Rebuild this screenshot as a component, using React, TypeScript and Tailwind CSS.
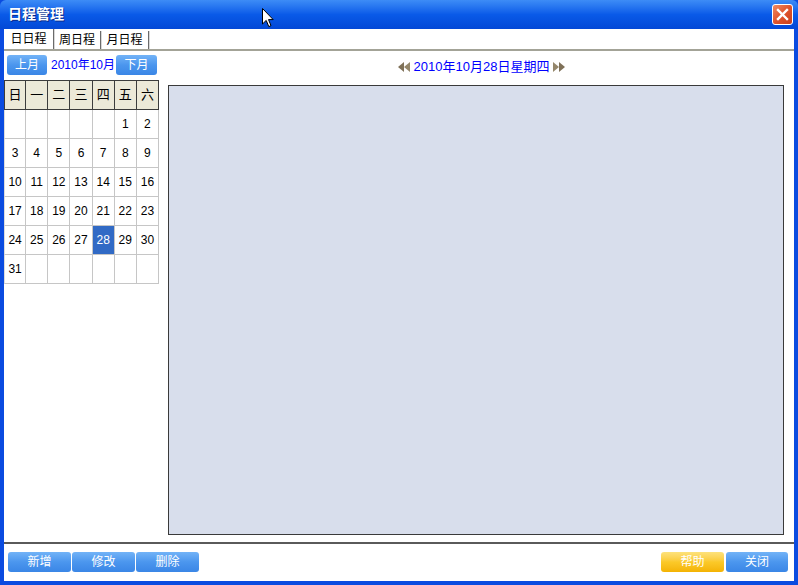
import React from 'react';

const weekNames = ['日', '一', '二', '三', '四', '五', '六'];

// October 2010 starts on Friday
const days: (number | null)[] = [
    null, null, null, null, null, 1, 2,
    3, 4, 5, 6, 7, 8, 9,
    10, 11, 12, 13, 14, 15, 16,
    17, 18, 19, 20, 21, 22, 23,
    24, 25, 26, 27, 28, 29, 30,
    31, null, null, null, null, null, null,
];

const font = { fontFamily: '"Liberation Sans", "Noto Sans CJK SC", sans-serif' };

function BlueButton({ label, className = '' }: { label: string; className?: string }) {
    return (
        <button
            className={`shrink-0 h-[20px] rounded-[3px] bg-gradient-to-b from-[#72b3f7] via-[#4b96ee] to-[#3a86e6] text-white text-[12px] leading-[20px] ${className}`}
        >
            {label}
        </button>
    );
}

function DoubleArrow({ dir }: { dir: 'left' | 'right' }) {
    return (
        <svg width="12" height="12" viewBox="0 0 12 12" className={dir === 'right' ? 'rotate-180' : ''}>
            <path d="M6 1 L0 6 L6 11 Z" fill="#7f7158" />
            <path d="M12 1 L6 6 L12 11 Z" fill="#95876b" />
        </svg>
    );
}

export default function App() {
    return (
        <div className="relative w-[798px] h-[585px] flex flex-col bg-[#0a4be0] overflow-hidden" style={font}>
            {/* Title bar */}
            <div className="h-[29px] flex items-center justify-between pl-[8px] pr-[5px] bg-gradient-to-b from-[#3d8cf6] via-[#0a5ae8] to-[#0348d6] rounded-t-[6px]">
                <span className="text-white font-bold text-[14px] [text-shadow:1px_1px_0_#0a2a8a]">日程管理</span>
                <div className="w-[21px] h-[21px] rounded-[3px] border border-white bg-gradient-to-br from-[#f08a62] via-[#e0542c] to-[#c8401c] flex items-center justify-center">
                    <svg width="13" height="13" viewBox="0 0 13 13">
                        <path d="M2 2 L11 11 M11 2 L2 11" stroke="white" strokeWidth="2.4" strokeLinecap="square" />
                    </svg>
                </div>
            </div>

            {/* Window body */}
            <div className="flex-1 mx-[4px] mb-[4px] bg-white flex flex-col">
                {/* Tabs */}
                <div className="h-[22px] flex items-end border-b-2 border-[#a3a397] text-[12px] text-black">
                    <div className="h-[20px] w-[50px] flex items-center justify-center border-r border-[#6b6b6b] shadow-[1px_0_0_#d8d8d8]">日日程</div>
                    <div className="h-[18px] w-[47px] flex items-center justify-center border-r border-[#6b6b6b] shadow-[1px_0_0_#d8d8d8]">周日程</div>
                    <div className="h-[18px] w-[48px] flex items-center justify-center border-r border-[#6b6b6b] shadow-[1px_0_0_#d8d8d8]">月日程</div>
                </div>

                {/* Content */}
                <div className="flex-1 flex">
                    {/* Left calendar column */}
                    <div className="w-[155px] shrink-0 flex flex-col">
                        <div className="h-[27px] flex items-center pl-[3px] pt-[1px]">
                            <BlueButton label="上月" className="w-[40px]" />
                            <span className="ml-[4px] text-[12px] text-[#0000ff] whitespace-nowrap">2010年10月</span>
                            <BlueButton label="下月" className="w-[41px] ml-[1px]" />
                        </div>
                        <div className="mt-[2px] grid grid-cols-7 w-[155px]">
                            {weekNames.map((w, i) => (
                                <div
                                    key={w}
                                    className={`h-[30px] bg-[#ece9d8] border-t border-b border-r border-[#3c3c3c] flex items-center justify-center text-[13px] text-black ${i === 0 ? 'border-l' : ''}`}
                                >
                                    {w}
                                </div>
                            ))}
                            {days.map((d, i) => (
                                <div
                                    key={i}
                                    className={`h-[29px] border-b border-r border-[#c6c6c6] flex items-center justify-center text-[12px] ${i % 7 === 0 ? 'border-l border-l-[#dcdcdc]' : ''} ${d === 28 ? 'bg-[#316ac5] text-white' : 'text-black'}`}
                                >
                                    {d ?? ''}
                                </div>
                            ))}
                        </div>
                    </div>

                    {/* Right day view */}
                    <div className="flex-1 flex flex-col pl-[9px] pr-[10px]">
                        <div className="h-[34px] flex items-center justify-center gap-[4px] pb-[3px] pl-[11px]">
                            <DoubleArrow dir="left" />
                            <span className="text-[13px] text-[#0000ff] whitespace-nowrap">2010年10月28日星期四</span>
                            <DoubleArrow dir="right" />
                        </div>
                        <div className="h-[450px] bg-[#d8deec] border border-[#3a3a3a]"></div>
                    </div>
                </div>

                {/* Bottom bar */}
                <div className="border-t-2 border-[#5a5a5a] h-[39px] flex items-center justify-between pl-[4px] pr-[6px] pb-[1px]">
                    <div className="flex gap-[1px]">
                        <BlueButton label="新增" className="w-[63px]" />
                        <BlueButton label="修改" className="w-[63px]" />
                        <BlueButton label="删除" className="w-[63px]" />
                    </div>
                    <div className="flex gap-[2px]">
                        <button className="w-[63px] h-[20px] rounded-[3px] bg-gradient-to-b from-[#fde27a] via-[#fbc928] to-[#f4b300] text-white text-[12px] leading-[20px]">帮助</button>
                        <BlueButton label="关闭" className="w-[62px]" />
                    </div>
                </div>
            </div>

            {/* Mouse pointer over the title bar */}
            <svg className="absolute left-[262px] top-[8px]" width="12" height="20" viewBox="0 0 12 20">
                <path d="M0.5 0.5 L0.5 16 L4.2 12.4 L6.8 18.6 L9 17.6 L6.5 11.6 L11.2 11.6 Z" fill="white" stroke="black" strokeWidth="1" />
            </svg>
        </div>
    );
}
